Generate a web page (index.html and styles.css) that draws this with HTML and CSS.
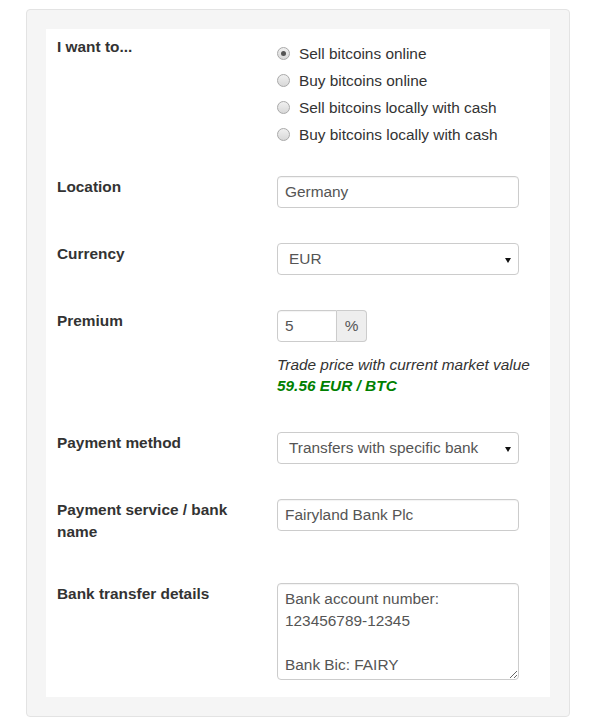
FILE: index.html
```html
<!DOCTYPE html>
<html>
<head>
<meta charset="utf-8">
<link rel="stylesheet" href="styles.css">
</head>
<body>
<div class="page">
  <div class="well">
    <form class="panel">
      <div class="row row-first">
        <div class="label">I want to...</div>
        <div class="control radios">
          <label class="radio"><span class="dot checked"></span>Sell bitcoins online</label>
          <label class="radio"><span class="dot"></span>Buy bitcoins online</label>
          <label class="radio"><span class="dot"></span>Sell bitcoins locally with cash</label>
          <label class="radio"><span class="dot"></span>Buy bitcoins locally with cash</label>
        </div>
      </div>
      <div class="row">
        <div class="label">Location</div>
        <div class="control"><input class="field" type="text" value="Germany"></div>
      </div>
      <div class="row">
        <div class="label">Currency</div>
        <div class="control"><div class="select"><span class="select-text">EUR</span><span class="caret"></span></div></div>
      </div>
      <div class="row row-premium">
        <div class="label">Premium</div>
        <div class="control">
          <div class="group"><input class="field field-small" type="text" value="5"><span class="addon">%</span></div>
          <div class="help">Trade price with current market value<br><strong class="price">59.56 EUR / BTC</strong></div>
        </div>
      </div>
      <div class="row">
        <div class="label">Payment method</div>
        <div class="control"><div class="select"><span class="select-text">Transfers with specific bank</span><span class="caret"></span></div></div>
      </div>
      <div class="row row-bank">
        <div class="label">Payment service / bank name</div>
        <div class="control"><input class="field" type="text" value="Fairyland Bank Plc"></div>
      </div>
      <div class="row row-last">
        <div class="label">Bank transfer details</div>
        <div class="control"><textarea class="area">Bank account number:
123456789-12345

Bank Bic: FAIRY</textarea></div>
      </div>
    </form>
  </div>
</div>
</body>
</html>
```

FILE: styles.css
```css
* { box-sizing: border-box; }
html, body { margin: 0; padding: 0; background: #fff; }
body {
  font-family: "Liberation Sans", Arial, sans-serif;
  font-size: 15.4px;
  line-height: 22px;
  color: #333;
}
.page { padding: 9px 0 0 26px; }
.well {
  width: 544px;
  background: #f5f5f5;
  border: 1px solid #e3e3e3;
  border-radius: 4px;
  padding: 19px;
}
.panel {
  background: #fff;
  padding: 7px 0 17px 11px;
  margin: 0;
}
.row {
  display: flex;
  align-items: flex-start;
  margin-bottom: 35px;
}
.row-first { margin-bottom: 28px; }
.row-premium { margin-bottom: 36px; }
.row-bank { margin-bottom: 40px; }
.row-last { margin-bottom: 0; }
.label {
  width: 205px;
  margin-right: 15px;
  font-weight: bold;
  color: #333;
}
.control { width: 270px; }
.radios { padding-top: 4px; }
.radio {
  display: flex;
  align-items: center;
  height: 27px;
  line-height: 27px;
  color: #333;
}
.dot {
  width: 13px;
  height: 13px;
  border-radius: 50%;
  border: 1px solid #a9a9a9;
  background: linear-gradient(#f0f0f0, #d8d8d8);
  margin-right: 9px;
  position: relative;
  flex: none;
}
.dot.checked::after {
  content: "";
  position: absolute;
  left: 3px;
  top: 3px;
  width: 5px;
  height: 5px;
  border-radius: 50%;
  background: #555;
}
.field {
  display: block;
  width: 242px;
  height: 32px;
  padding: 0 7px;
  border: 1px solid #ccc;
  border-radius: 4px;
  font-family: inherit;
  font-size: 15.4px;
  color: #555;
  background: #fff;
  box-shadow: inset 0 1px 1px rgba(0,0,0,0.05);
  outline: none;
}
.select {
  position: relative;
  display: flex;
  align-items: center;
  width: 242px;
  height: 32px;
  padding: 0 11px;
  border: 1px solid #ccc;
  border-radius: 4px;
  color: #555;
  background: #fff;
}
.caret {
  position: absolute;
  right: 7px;
  top: 14px;
  width: 0;
  height: 0;
  border-left: 3px solid transparent;
  border-right: 3px solid transparent;
  border-top: 5px solid #111;
}
.group { display: flex; }
.field-small {
  width: 60px;
  border-radius: 4px 0 0 4px;
}
.addon {
  width: 30px;
  height: 32px;
  display: flex;
  align-items: center;
  justify-content: center;
  background: #eee;
  border: 1px solid #ccc;
  border-left: 0;
  border-radius: 0 4px 4px 0;
  color: #555;
}
.help {
  margin-top: 12px;
  font-style: italic;
  line-height: 21px;
  color: #333;
  white-space: nowrap;
}
.price { color: #008000; font-weight: bold; }
.area {
  display: block;
  width: 242px;
  height: 97px;
  padding: 4px 7px;
  border: 1px solid #ccc;
  border-radius: 4px;
  font-family: inherit;
  font-size: 15.4px;
  line-height: 22px;
  color: #555;
  resize: vertical;
  outline: none;
  overflow: hidden;
  box-shadow: inset 0 1px 1px rgba(0,0,0,0.05);
}
```
